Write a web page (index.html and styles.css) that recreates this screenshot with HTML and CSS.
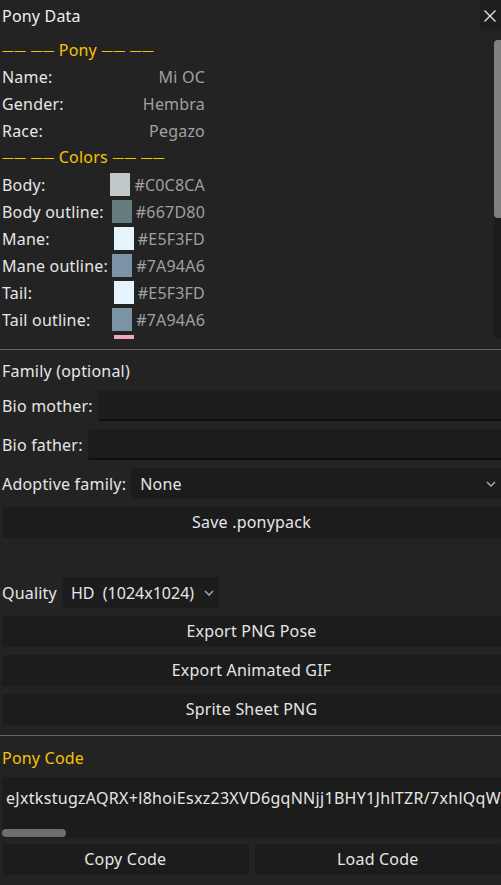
FILE: index.html
```html
<!DOCTYPE html>
<html lang='en'>

<head>
    <meta charset='UTF-8'>
    <meta name='viewport' content='width=device-width, initial-scale=1.0'>
    <title>Pony Data</title>
    <link rel="stylesheet" href="styles.css">
</head>

<body>
    <div class="panel">
        <div class="titlebar">
            <span class="title">Pony Data</span>
            <button class="close">
                <svg width="12" height="12" viewBox="0 0 12 12">
                    <path d="M0.5 0.5 L11.5 11.5 M11.5 0.5 L0.5 11.5" stroke="#e8e8e8" stroke-width="1.3" fill="none" />
                </svg>
            </button>
        </div>

        <div class="scroll">
            <div class="scroll-content">
                <div class="grid">
                    <div class="heading"><span class="rule">——</span> <span class="rule">——</span> Pony <span class="rule">——</span> <span class="rule">——</span></div>
                    <div class="label">Name:</div>
                    <div class="value">Mi OC</div>
                    <div class="label">Gender:</div>
                    <div class="value">Hembra</div>
                    <div class="label">Race:</div>
                    <div class="value">Pegazo</div>

                    <div class="heading"><span class="rule">——</span> <span class="rule">——</span> Colors <span class="rule">——</span> <span class="rule">——</span></div>
                    <div class="label">Body:</div>
                    <div class="value"><span class="swatch" style="background:#C0C8CA"></span>#C0C8CA</div>
                    <div class="label">Body outline:</div>
                    <div class="value"><span class="swatch" style="background:#667D80"></span>#667D80</div>
                    <div class="label">Mane:</div>
                    <div class="value"><span class="swatch" style="background:#E5F3FD"></span>#E5F3FD</div>
                    <div class="label">Mane outline:</div>
                    <div class="value"><span class="swatch" style="background:#7A94A6"></span>#7A94A6</div>
                    <div class="label">Tail:</div>
                    <div class="value"><span class="swatch" style="background:#E5F3FD"></span>#E5F3FD</div>
                    <div class="label">Tail outline:</div>
                    <div class="value"><span class="swatch" style="background:#7A94A6"></span>#7A94A6</div>
                    <!-- next row, scrolled out of view -->
                    <div class="label"></div>
                    <div class="value"><span class="swatch next" style="background:#F4A7BC"></span></div>
                </div>
            </div>
            <div class="scrollbar">
                <div class="thumb"></div>
            </div>
        </div>

        <div class="sep"></div>

        <!-- family -->
        <div class="stack family">
            <div class="section-label">Family (optional)</div>
            <div class="field-row">
                <span>Bio mother:</span>
                <div class="input"></div>
            </div>
            <div class="field-row">
                <span>Bio father:</span>
                <div class="input"></div>
            </div>
            <div class="field-row">
                <span>Adoptive family:</span>
                <div class="select wide">
                    <span>None</span>
                    <svg class="chev" width="10" height="6" viewBox="0 0 10 6">
                        <path d="M1 1 L5 5 L9 1" stroke="#a8a8a8" stroke-width="1.5" fill="none" />
                    </svg>
                </div>
            </div>
            <div class="btn">Save .ponypack</div>
        </div>

        <!-- export -->
        <div class="stack export">
            <div class="field-row">
                <span>Quality</span>
                <div class="select">
                    <span class="pre">HD  (1024x1024)</span>
                    <svg class="chev" width="10" height="6" viewBox="0 0 10 6">
                        <path d="M1 1 L5 5 L9 1" stroke="#a8a8a8" stroke-width="1.5" fill="none" />
                    </svg>
                </div>
            </div>
            <div class="btn">Export PNG Pose</div>
            <div class="btn">Export Animated GIF</div>
            <div class="btn">Sprite Sheet PNG</div>
        </div>

        <div class="sep sep-low"></div>

        <!-- code -->
        <div class="code-section">
            <div class="section-label gold">Pony Code</div>
            <div class="code-field">
                <div class="code-text">eJxtkstugzAQRX+l8hoiEsxz23XVD6gqNNjj1BHY1JhlTZR/7xhlQqW</div>
                <div class="hthumb"></div>
            </div>
            <div class="btn-row">
                <div class="btn">Copy Code</div>
                <div class="btn">Load Code</div>
            </div>
        </div>
    </div>
</body>

</html>
```

FILE: styles.css
```css
:root {
    --bg: #232323;
    --field: #1c1c1c;
    --text: #e6e6e6;
    --muted: #a0a0a0;
    --gold: #f5c400;
}

html,
body {
    padding: 0;
    margin: 0;
}

body {
    width: 501px;
    height: 885px;
    overflow: hidden;
    background: var(--bg);
    color: var(--text);
    font-family: "Noto Sans", "Open Sans", sans-serif;
    font-size: 16px;
    letter-spacing: 0.2px;
    line-height: 22px;
}

.panel {
    padding-left: 2px;
    border-left: 1px solid #2c2c2c;
    height: 885px;
    box-sizing: border-box;
    margin-left: -1px;
}

/* title */
.titlebar {
    display: flex;
    justify-content: space-between;
    height: 31px;
}

.title {
    line-height: 32px;
    color: #efefef;
}

.close {
    width: 21px;
    height: 31px;
    padding: 0 0 0 4px;
    border: none;
    background: #1e1e1e;
    border-radius: 0 0 0 4px;
    display: flex;
    align-items: center;
}

/* scroll area */
.scroll {
    display: flex;
    height: 299px;
    margin-top: 9px;
    overflow: hidden;
}

.scroll-content {
    flex: 1;
    overflow: hidden;
}

.grid {
    width: 203px;
    display: grid;
    grid-template-columns: auto 1fr;
    grid-template-rows: 21px;
    grid-auto-rows: 23px;
    row-gap: 4px;
    align-items: center;
}

.heading {
    grid-column: 1 / -1;
    color: var(--gold);
    white-space: nowrap;
}

.rule {
    font-size: 12px;
    letter-spacing: 0;
    vertical-align: 1px;
}

.value {
    display: flex;
    justify-content: flex-end;
    align-items: center;
    gap: 4px;
    color: var(--muted);
}

.swatch {
    width: 20px;
    height: 23px;
}

.swatch.next {
    margin-right: 71px;
}

.scrollbar {
    width: 7px;
    background: #1c1c1c;
    border-radius: 4px 0 0 4px;
}

.thumb {
    height: 178px;
    background: #808080;
    border-radius: 4px 0 0 4px;
}

.sep {
    height: 1px;
    background: #666;
    margin: 10px 0 0 -2px;
}

.sep-low {
    margin-top: 10px;
}

/* stacked controls */
.stack {
    display: flex;
    flex-direction: column;
}

.family {
    padding-top: 10px;
    gap: 8px;
}

.family .field-row:first-of-type {
    margin-top: 1px;
}

.export {
    margin-top: 39px;
    gap: 8px;
}

.field-row {
    display: flex;
    align-items: center;
    gap: 5px;
}

.field-row > span {
    white-space: nowrap;
}

.input {
    flex: 1;
    height: 29px;
    background: #1d1d1d;
    border-bottom: 2px solid #0f0f0f;
    border-radius: 3px 0 0 3px;
}

.select {
    display: flex;
    align-items: center;
    justify-content: space-between;
    height: 31px;
    padding: 0 5px 0 9px;
    gap: 10px;
    background: var(--field);
    border-radius: 4px;
}

.select.wide {
    flex: 1;
    border-radius: 4px 0 0 4px;
}

.select .pre {
    white-space: pre;
    letter-spacing: 0;
}

.chev {
    flex-shrink: 0;
}

.btn {
    height: 31px;
    line-height: 31px;
    text-align: center;
    background: var(--field);
    border-radius: 3px 0 0 3px;
}

/* pony code */
.code-section {
    padding-top: 11px;
}

.gold {
    color: var(--gold);
}

.code-field {
    margin-top: 8px;
    height: 61px;
    background: var(--field);
    display: flex;
    flex-direction: column;
    overflow: hidden;
}

.code-text {
    padding: 10px 0 0 4px;
    white-space: nowrap;
    letter-spacing: 0.3px;
}

.hthumb {
    margin-top: auto;
    margin-bottom: 1px;
    width: 64px;
    height: 8px;
    border-radius: 4px;
    background: #6e6e6e;
}

.btn-row {
    margin-top: 6px;
    display: grid;
    grid-template-columns: 1fr 1fr;
    gap: 6px;
}

.btn-row .btn {
    border-radius: 3px;
}
```
